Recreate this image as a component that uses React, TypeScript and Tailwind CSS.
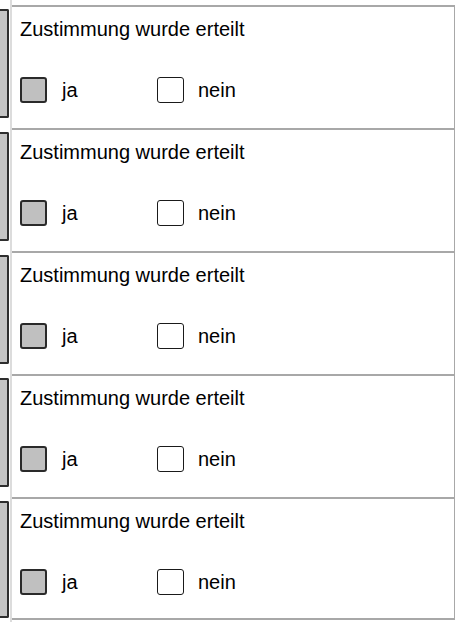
const rows = [1, 2, 3, 4, 5];

const Checkbox = ({ checked }: { checked?: boolean }) => (
    <div
        className={
            checked
                ? 'w-[27px] h-[26px] rounded-[3px] border-2 border-[#2a2a2a] bg-[#c0c0c0]'
                : 'w-[27px] h-[26px] rounded-[3px] border-[1.5px] border-[#1a1a1a] bg-white'
        }
    />
);

const ConsentRow = ({ last }: { last?: boolean }) => (
    <div
        className={
            'h-[123px] border-t-2 border-r border-[#a8a8a8] pl-[8px] pt-[12px] ' +
            (last ? 'border-b-2' : '')
        }
    >
        <p className="text-[20px] leading-[20px] text-black">Zustimmung wurde erteilt</p>
        <div className="flex items-center mt-[38px]">
            <label className="flex items-center gap-[15px] w-[137px]">
                <Checkbox checked />
                <span className="text-[20px] leading-[20px] text-black">ja</span>
            </label>
            <label className="flex items-center gap-[14px]">
                <Checkbox />
                <span className="text-[20px] leading-[20px] text-black">nein</span>
            </label>
        </div>
    </div>
);

export default function App() {
    return (
        <div className="flex w-[456px] h-[622px] bg-white overflow-hidden font-['Liberation_Sans',Arial,sans-serif]">
            {/* left rail */}
            <div className="w-[12px] shrink-0 border-r-2 border-[#dcdcdc] pt-[9px] flex flex-col gap-[14px]">
                {rows.map((r) => (
                    <div
                        key={r}
                        className={
                            'w-[9px] rounded-r-[2px] border-2 border-l-0 border-[#2e2e2e] bg-[#c4c4c4] ' +
                            (r === 5 ? 'h-[117px]' : 'h-[109px]')
                        }
                    />
                ))}
            </div>

            {/* rows */}
            <div className="flex-1 mr-[1px] pt-[5px]">
                {rows.map((r) => (
                    <ConsentRow key={r} last={r === 5} />
                ))}
            </div>
        </div>
    );
}
